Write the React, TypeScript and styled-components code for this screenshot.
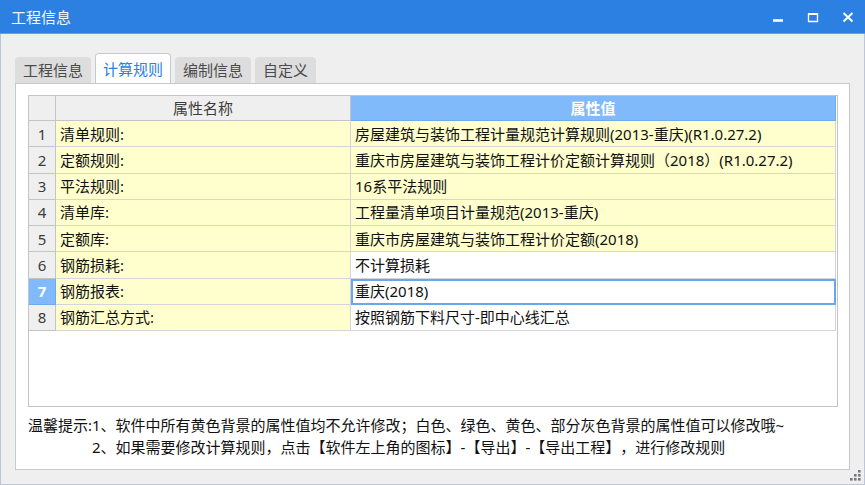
import React, { useState } from "react";
import styled, { createGlobalStyle } from "styled-components";

const GlobalStyle = createGlobalStyle`
  * { box-sizing: border-box; }
  body {
    margin: 0;
    font-family: "Noto Sans", "Noto Sans CJK SC", sans-serif;
    font-size: 15px;
    line-height: 22px;
    color: #111;
    text-spacing-trim: space-all;
  }
  button { font: inherit; }
`;

const Dialog = styled.main`
  display: flex;
  flex-direction: column;
  min-height: 100vh;
  background: #efefef;
`;

const TitleBar = styled.header`
  display: flex;
  align-items: center;
  justify-content: space-between;
  height: 34px;
  padding: 0 7px 0 11px;
  background: #2c80e2;
  border-bottom: 1px solid #619fe8;
`;

const Title = styled.h1`
  margin: 0;
  font-size: 15px;
  font-weight: 400;
  color: #f2f7fe;
`;

const WindowButtons = styled.div`
  display: flex;
  gap: 15px;
`;

const WindowButton = styled.button`
  display: flex;
  align-items: center;
  justify-content: center;
  width: 20px;
  height: 22px;
  padding: 0;
  border: 0;
  background: transparent;
  color: #fff;
`;

const Body = styled.div`
  flex: 1;
  display: flex;
  flex-direction: column;
  padding: 19px 14px 0;
  border: 1px solid #bcc6d8;
  border-top: 0;
`;

const TabList = styled.div`
  display: flex;
  align-items: flex-end;
  gap: 4px;
  height: 30px;
`;

const Tab = styled.button<{ $active: boolean }>`
  height: ${(p) => (p.$active ? 31 : 26)}px;
  margin-bottom: ${(p) => (p.$active ? -1 : 0)}px;
  padding: 0 ${(p) => (p.$active ? 7 : 8)}px;
  border: ${(p) => (p.$active ? "1px solid #c6c9ce" : "0")};
  border-bottom: 0;
  border-radius: 4px 4px 0 0;
  background: ${(p) => (p.$active ? "#fff" : "#dddddd")};
  color: ${(p) => (p.$active ? "#2c80e2" : "#4a4a4a")};
  line-height: 26px;
  white-space: nowrap;
`;

const Panel = styled.section`
  flex: 1;
  display: flex;
  flex-direction: column;
  padding: 11px 11px 11px 12px;
  border: 1px solid #c6c9ce;
  background: #fff;
`;

const TableFrame = styled.div`
  flex: 1;
  padding-right: 1px;
  border: 1px solid #c4c4c8;
`;

const Table = styled.table`
  width: 100%;
  height: 235px;
  table-layout: fixed;
  border-collapse: separate;
  border-spacing: 0;
`;

const IndexCol = styled.col`
  width: 27px;
`;

const NameCol = styled.col`
  width: 295px;
`;

const HeadCell = styled.th<{ $selected?: boolean }>`
  height: 25px;
  padding: 0;
  border-right: 1px solid ${(p) => (p.$selected ? "#6fabeb" : "#c4c4c8")};
  border-bottom: 1px solid ${(p) => (p.$selected ? "#6fabeb" : "#c4c4c8")};
  background: ${(p) => (p.$selected ? "#80bafa" : "#efefef")};
  color: ${(p) => (p.$selected ? "#fff" : "#3c3c3c")};
  font-weight: ${(p) => (p.$selected ? 700 : 400)};
`;

const Cell = styled.td<{ $locked?: boolean; $selected?: boolean }>`
  padding: 0 4px;
  border-right: 1px solid #d3d5da;
  border-bottom: 1px solid #d3d5da;
  background: ${(p) => (p.$locked ? "#ffffcd" : "#fff")};
  white-space: nowrap;
  ${(p) => p.$selected && "outline: 2px solid #68a8ea; outline-offset: -2px;"}
`;

const Hint = styled.div`
  display: flex;
  padding-top: 7px;
`;

const HintText = styled.p`
  margin: 0;
`;

const Footer = styled.footer`
  display: flex;
  justify-content: flex-end;
  align-items: flex-start;
  height: 14px;
  margin-right: -11px;
`;

const tabs = ["工程信息", "计算规则", "编制信息", "自定义"];

const rows = [
  { name: "清单规则:", value: "房屋建筑与装饰工程计量规范计算规则(2013-重庆)(R1.0.27.2)", locked: true },
  { name: "定额规则:", value: "重庆市房屋建筑与装饰工程计价定额计算规则（2018）(R1.0.27.2)", locked: true },
  { name: "平法规则:", value: "16系平法规则", locked: true },
  { name: "清单库:", value: "工程量清单项目计量规范(2013-重庆)", locked: true },
  { name: "定额库:", value: "重庆市房屋建筑与装饰工程计价定额(2018)", locked: true },
  { name: "钢筋损耗:", value: "不计算损耗", locked: false },
  { name: "钢筋报表:", value: "重庆(2018)", locked: false },
  { name: "钢筋汇总方式:", value: "按照钢筋下料尺寸-即中心线汇总", locked: false },
];

const gripDots = [[8, 0], [4, 4], [8, 4], [0, 8], [4, 8], [8, 8]];

export default function App() {
  const [activeTab, setActiveTab] = useState(1);
  const [selectedRow, setSelectedRow] = useState(6);

  return (
    <Dialog>
      <GlobalStyle />
      <TitleBar>
        <Title>工程信息</Title>
        <WindowButtons>
          <WindowButton type="button" aria-label="最小化">
            <svg width="12" height="12"><path d="M1 9.5h10" stroke="currentColor" strokeWidth="2.6" /></svg>
          </WindowButton>
          <WindowButton type="button" aria-label="最大化">
            <svg width="12" height="12" fill="none" stroke="currentColor">
              <path d="M1.5 2v8.5h9V2" strokeWidth="1.3" />
              <path d="M1 3h10" strokeWidth="2" />
            </svg>
          </WindowButton>
          <WindowButton type="button" aria-label="关闭">
            <svg width="12" height="12"><path d="M1.5 2l9 8.5M10.5 2l-9 8.5" stroke="currentColor" strokeWidth="2" /></svg>
          </WindowButton>
        </WindowButtons>
      </TitleBar>
      <Body>
        <TabList role="tablist">
          {tabs.map((label, i) => (
            <Tab
              key={label}
              type="button"
              role="tab"
              aria-selected={i === activeTab}
              $active={i === activeTab}
              onClick={() => setActiveTab(i)}
            >
              {label}
            </Tab>
          ))}
        </TabList>
        <Panel role="tabpanel">
          <TableFrame>
            <Table>
              <colgroup>
                <IndexCol />
                <NameCol />
                <col />
              </colgroup>
              <thead>
                <tr>
                  <HeadCell />
                  <HeadCell scope="col">属性名称</HeadCell>
                  <HeadCell scope="col" $selected>属性值</HeadCell>
                </tr>
              </thead>
              <tbody>
                {rows.map((row, i) => (
                  <tr key={row.name} onClick={() => setSelectedRow(i)}>
                    <HeadCell scope="row" $selected={i === selectedRow}>{i + 1}</HeadCell>
                    <Cell $locked>{row.name}</Cell>
                    <Cell $locked={row.locked} $selected={i === selectedRow}>{row.value}</Cell>
                  </tr>
                ))}
              </tbody>
            </Table>
          </TableFrame>
          <Hint>
            <HintText>温馨提示:</HintText>
            <div>
              <HintText>1、软件中所有黄色背景的属性值均不允许修改；白色、绿色、黄色、部分灰色背景的属性值可以修改哦~</HintText>
              <HintText>2、如果需要修改计算规则，点击【软件左上角的图标】-【导出】-【导出工程】，进行修改规则</HintText>
            </div>
          </Hint>
        </Panel>
        <Footer>
          <svg width="11" height="12" aria-hidden="true">
            {gripDots.map(([x, y]) => (
              <rect key={`${x}-${y}`} x={x} y={y} width="2.6" height="2.6" fill="#77797f" />
            ))}
          </svg>
        </Footer>
      </Body>
    </Dialog>
  );
}
